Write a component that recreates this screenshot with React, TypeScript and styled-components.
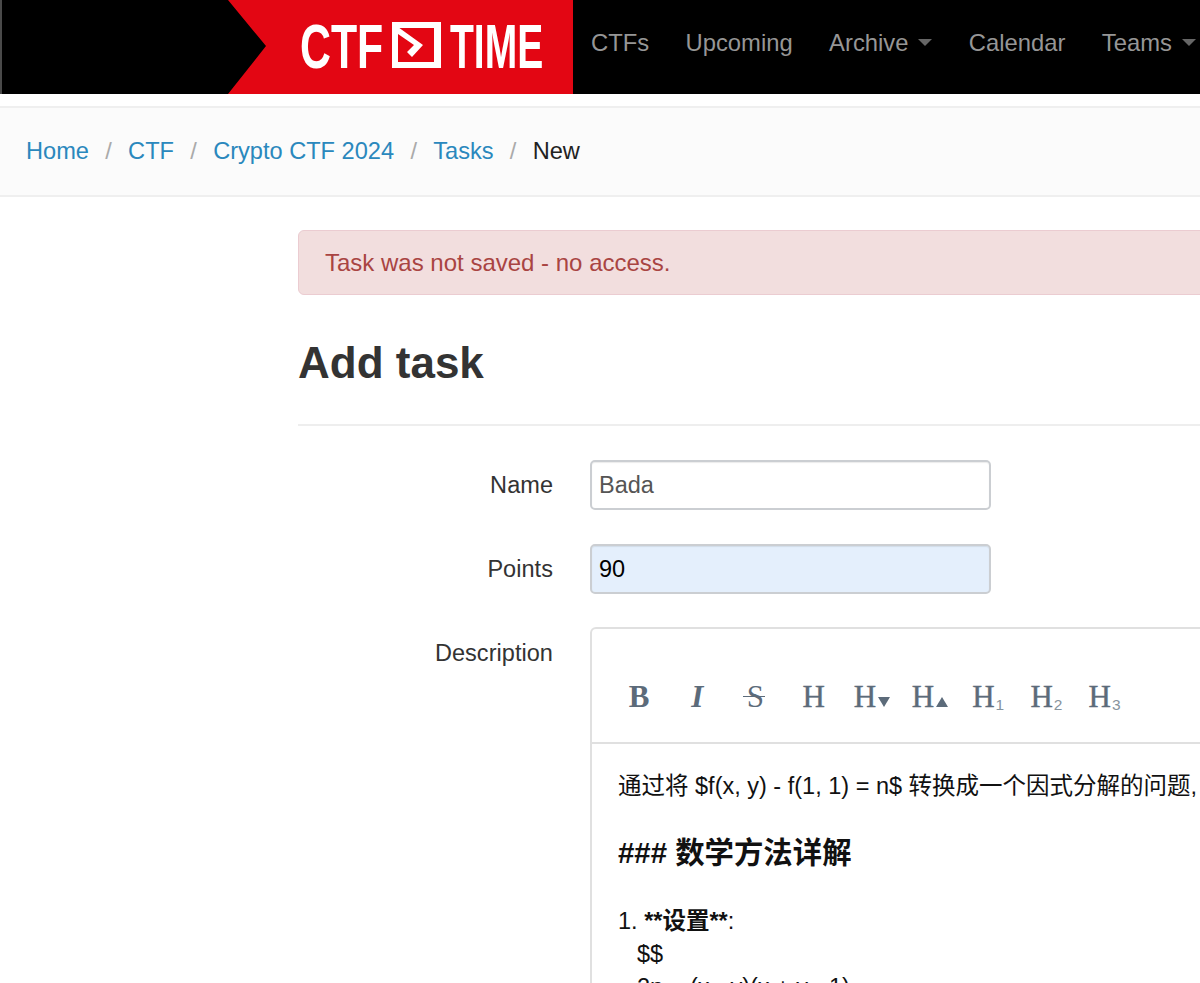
import React from "react"
import styled, { createGlobalStyle } from "styled-components"

const Global = createGlobalStyle`
  html, body {
    margin: 0;
    padding: 0;
    width: 1200px;
    height: 983px;
    overflow: hidden;
    background: #fff;
  }
  body {
    font-family: "Liberation Sans", "Noto Sans CJK SC", sans-serif;
    font-size: 23.5px;
    color: #333;
  }
  * { box-sizing: border-box; }
`

const Page = styled.div`
  width: 1200px;
  height: 983px;
  overflow: hidden;
`
const Navbar = styled.nav`
  display: flex;
  align-items: stretch;
  height: 94px;
  padding-left: 228px;
  background: #000;
  border-left: 2px solid #4a4a4a;
  margin-bottom: 12px;
`
const Brand = styled.a`
  display: flex;
  align-items: center;
  width: 345px;
  margin-left: -2px;
  padding: 0 0 4px 72px;
  background: #e30613;
  clip-path: polygon(0 0, 100% 0, 100% 100%, 0 100%, 38px 49%);
`
const NavList = styled.ul`
  display: flex;
  align-items: center;
  list-style: none;
  margin: 0;
  padding: 0 0 9px 18px;
  gap: 36.4px;
  font-size: 23.8px;
  white-space: nowrap;
`
const NavItem = styled.li`
  display: flex;
  align-items: center;
  gap: 10px;
  color: #969696;
`
const Caret = styled.span`
  width: 0;
  height: 0;
  border-left: 7px solid transparent;
  border-right: 7px solid transparent;
  border-top: 7px solid #666;
`
const Breadcrumb = styled.ol`
  display: flex;
  align-items: center;
  list-style: none;
  margin: 0 0 33px;
  height: 91px;
  padding: 0 0 0 26px;
  font-size: 23.6px;
  background: #fbfbfb;
  border-top: 2px solid #efefef;
  border-bottom: 2px solid #efefef;
`
const Crumb = styled.li<{ $active?: boolean }>`
  color: ${(props) => (props.$active ? "#222" : "#2a88bd")};
`
const Slash = styled.li`
  color: #aaa;
  padding: 0 16.3px;
`
const Content = styled.main`
  width: 1100px;
  margin-left: 298px;
`
const Alert = styled.div`
  display: flex;
  align-items: center;
  height: 65px;
  padding-left: 26px;
  font-size: 24px;
  background: #f2dede;
  border: 1px solid #ebccd1;
  border-radius: 6px;
  color: #a94442;
  margin-bottom: 37px;
`
const Title = styled.h1`
  margin: 0 0 34px;
  height: 94px;
  font-size: 44px;
  line-height: 62px;
  font-weight: 700;
  color: #333;
  border-bottom: 2px solid #eee;
`
const FormRow = styled.div`
  display: grid;
  grid-template-columns: 255px 1fr;
  column-gap: 37px;
  margin-bottom: 34px;
`
const Label = styled.label`
  display: block;
  text-align: right;
  line-height: 50px;
  letter-spacing: 0.05px;
  color: #333;
`
const TextInput = styled.input<{ $filled?: boolean }>`
  display: block;
  width: 401px;
  height: 50px;
  padding: 0 7px;
  font: inherit;
  color: ${(props) => (props.$filled ? "#000" : "#555")};
  background: ${(props) => (props.$filled ? "#e4effc" : "#fff")};
  border: 2px solid #cbced2;
  border-radius: 5px;
  box-shadow: inset 0 1px 1px rgba(0, 0, 0, 0.08);
`
const Editor = styled.div`
  margin-top: -1px;
  height: 500px;
  border: 2px solid #e0e0e0;
  border-radius: 6px 0 0 0;
`
const Toolbar = styled.div`
  display: flex;
  align-items: center;
  height: 115px;
  padding: 22px 0 0 18px;
  border-bottom: 2px solid #e0e0e0;
`
const ToolButton = styled.span<{ $bold?: boolean; $italic?: boolean; $strike?: boolean }>`
  position: relative;
  display: flex;
  justify-content: center;
  align-items: baseline;
  width: 58.2px;
  font-family: "Liberation Serif", serif;
  font-size: 31px;
  color: #5c6b7a;
  -webkit-text-stroke: ${(props) => (props.$strike || props.$bold ? "0" : "0.4px")};
  font-weight: ${(props) => (props.$bold ? 700 : 400)};
  font-style: ${(props) => (props.$italic ? "italic" : "normal")};
`
const StrikeLine = styled.span`
  position: absolute;
  left: 17px;
  top: 17px;
  width: 22px;
  height: 1.5px;
  background: #5c6b7a;
`
const Sub = styled.span`
  font-family: "Liberation Sans", sans-serif;
  font-size: 15.5px;
  color: #87939d;
  -webkit-text-stroke: 0;
  margin-left: 1px;
  transform: translateY(3px);
`
const SmallTriangle = styled.span<{ $up?: boolean }>`
  width: 0;
  height: 0;
  margin-left: 2px;
  border-left: 6px solid transparent;
  border-right: 6px solid transparent;
  border-top: ${(props) => (props.$up ? "0" : "10px solid #5c6b7a")};
  border-bottom: ${(props) => (props.$up ? "10px solid #5c6b7a" : "0")};
`
const EditorBody = styled.div`
  padding: 26px 0 0 26px;
  color: #111;
  white-space: nowrap;
`
const Line = styled.div`
  line-height: 33px;
`
const Heading = styled.div`
  font-size: 29.4px;
  font-weight: 700;
  line-height: 40px;
  margin: 30px 0 32px;
`
const BoldText = styled.span`
  font-weight: 700;
`
const Indented = styled(Line)`
  padding-left: 19px;
`

const Logo = () => (
  <svg width="244" height="82" viewBox="0 -18 244 82" fill="#fff">
    <text transform="translate(0 45.5) scale(0.68 1)" fontFamily="Liberation Sans" fontWeight="700" fontSize="63">CTF</text>
    <path fillRule="evenodd" d="M92 0h49v46H92zM98 6v34h36V6z" />
    <path d="M98 5l25 18-11 12-5-5 7-7-16-11z" />
    <text transform="translate(150 45.5) scale(0.62 1)" fontFamily="Liberation Sans" fontWeight="700" fontSize="63">TIME</text>
  </svg>
)

export default function App() {
  return (
    <Page>
      <Global />
      <Navbar>
        <Brand>
          <Logo />
        </Brand>
        <NavList>
          <NavItem>CTFs</NavItem>
          <NavItem>Upcoming</NavItem>
          <NavItem>Archive <Caret /></NavItem>
          <NavItem>Calendar</NavItem>
          <NavItem>Teams <Caret /></NavItem>
        </NavList>
      </Navbar>
      <Breadcrumb>
        <Crumb>Home</Crumb>
        <Slash>/</Slash>
        <Crumb>CTF</Crumb>
        <Slash>/</Slash>
        <Crumb>Crypto CTF 2024</Crumb>
        <Slash>/</Slash>
        <Crumb>Tasks</Crumb>
        <Slash>/</Slash>
        <Crumb $active>New</Crumb>
      </Breadcrumb>
      <Content>
        <Alert>Task was not saved - no access.</Alert>
        <Title>Add task</Title>
        <FormRow>
          <Label>Name</Label>
          <TextInput defaultValue="Bada" />
        </FormRow>
        <FormRow>
          <Label>Points</Label>
          <TextInput $filled defaultValue="90" />
        </FormRow>
        <FormRow>
          <Label>Description</Label>
          <Editor>
            <Toolbar>
              <ToolButton $bold>B</ToolButton>
              <ToolButton $italic $bold>I</ToolButton>
              <ToolButton $strike>S<StrikeLine /></ToolButton>
              <ToolButton>H</ToolButton>
              <ToolButton>H<SmallTriangle /></ToolButton>
              <ToolButton>H<SmallTriangle $up /></ToolButton>
              <ToolButton>H<Sub>1</Sub></ToolButton>
              <ToolButton>H<Sub>2</Sub></ToolButton>
              <ToolButton>H<Sub>3</Sub></ToolButton>
            </Toolbar>
            <EditorBody>
              <Line>通过将 $f(x, y) - f(1, 1) = n$ 转换成一个因式分解的问题,</Line>
              <Heading>### 数学方法详解</Heading>
              <Line>1. <BoldText>**设置**</BoldText>:</Line>
              <Indented>$$</Indented>
              <Indented>2n = (x - y)(x + y - 1)</Indented>
            </EditorBody>
          </Editor>
        </FormRow>
      </Content>
    </Page>
  )
}
